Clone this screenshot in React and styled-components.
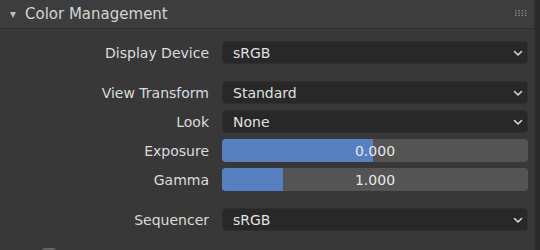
import React from "react";
import styled, { createGlobalStyle } from "styled-components";

const Global = createGlobalStyle`
  html, body {
    margin: 0;
    padding: 0;
    background: #2e2e2e;
  }
  body {
    font-family: "DejaVu Sans", "Liberation Sans", sans-serif;
  }
`;

const Chevron = () => (
  <svg width="10" height="7" viewBox="0 0 10 7">
    <path d="M1.5 1.5 L5 5 L8.5 1.5" fill="none" stroke="#d8d8d8" strokeWidth="1.6" strokeLinecap="round" strokeLinejoin="round" />
  </svg>
);

const Grip = () => (
  <svg width="14" height="8" viewBox="0 0 14 8">
    {[0, 1, 2, 3].map((c) =>
      [0, 1, 2].map((r) => (
        <rect key={c + "-" + r} x={1 + c * 3.3} y={1 + r * 2.4} width="1.5" height="1.3" fill="#8a8a8a" />
      ))
    )}
  </svg>
);

const rows = [
  [{ label: "Display Device", kind: "menu", value: "sRGB" }],
  [
    { label: "View Transform", kind: "menu", value: "Standard" },
    { label: "Look", kind: "menu", value: "None" },
    { label: "Exposure", kind: "slider", value: "0.000", fill: 49.3 },
    { label: "Gamma", kind: "slider", value: "1.000", fill: 19.9 },
  ],
  [{ label: "Sequencer", kind: "menu", value: "sRGB" }],
];

const App = () => {
  return (
    <Screen>
      <Global />
      <Panel>
        <Header>
          <Triangle />
          <Title>Color Management</Title>
          <GripBox>
            <Grip />
          </GripBox>
        </Header>
        <Body>
          {rows.map((group, gi) => (
            <Group key={gi}>
              {group.map((item) => (
                <Row key={item.label}>
                  <Label>{item.label}</Label>
                  {item.kind === "menu" ? (
                    <Menu>
                      <span>{item.value}</span>
                      <Chevron />
                    </Menu>
                  ) : (
                    <Slider>
                      <Fill style={{ width: item.fill + "%" }} />
                      <SliderText>{item.value}</SliderText>
                    </Slider>
                  )}
                </Row>
              ))}
            </Group>
          ))}
          <Group>
            <CheckRow>
              <Check />
            </CheckRow>
          </Group>
        </Body>
      </Panel>
      <Edge />
    </Screen>
  );
};

export default App;

const Screen = styled.div`
  display: flex;
  width: 540px;
  height: 250px;
  overflow: hidden;
`;

const Panel = styled.div`
  width: 534px;
  background: #383838;
  display: flex;
  flex-direction: column;
  overflow: hidden;

  & > * {
    flex-shrink: 0;
  }
`;

const Edge = styled.div`
  flex: 1;
  background: #2b2b2b;
  border-left: 1px solid #333;
`;

const Header = styled.div`
  height: 29px;
  background: #3d3d3d;
  border-bottom: 1px solid #2f2f2f;
  display: flex;
  align-items: center;
  padding-left: 10px;
  box-sizing: border-box;
`;

const Triangle = styled.div`
  width: 0;
  height: 0;
  border-left: 3.5px solid transparent;
  border-right: 3.5px solid transparent;
  border-top: 6px solid #bdbdbd;
  margin-right: 9px;
  margin-top: 1px;
`;

const Title = styled.div`
  font-size: 15px;
  color: #d4d4d4;
  flex: 1;
  line-height: 1;
`;

const GripBox = styled.div`
  display: flex;
  margin-right: 6px;
  margin-top: -2px;
`;

const Body = styled.div`
  display: flex;
  flex-direction: column;
  gap: 17px;
  padding: 12px 6px 0 0;
`;

const Group = styled.div`
  display: flex;
  flex-direction: column;
  gap: 6px;
`;

const Row = styled.div`
  display: flex;
  align-items: center;
  height: 23px;
`;

const Label = styled.div`
  width: 209px;
  margin-right: 13px;
  text-align: right;
  font-size: 14px;
  color: #dcdcdc;
`;

const Menu = styled.div`
  flex: 1;
  height: 23px;
  box-sizing: border-box;
  background: #282828;
  border: 1px solid #2f2f2f;
  border-radius: 4px;
  display: flex;
  align-items: center;
  justify-content: space-between;
  padding: 0 4px 0 10px;
  font-size: 14px;
  color: #e0e0e0;

  svg {
    margin-top: 1px;
  }
`;

const Slider = styled.div`
  flex: 1;
  height: 23px;
  position: relative;
  background: #545454;
  border-radius: 4px;
  overflow: hidden;
  display: flex;
  align-items: center;
  justify-content: center;
`;

const Fill = styled.div`
  position: absolute;
  left: 0;
  top: 0;
  bottom: 0;
  background: #5680c2;
`;

const SliderText = styled.span`
  position: relative;
  font-size: 14px;
  color: #e8e8e8;
`;

const CheckRow = styled.div`
  height: 23px;
  padding-left: 42px;
`;

const Check = styled.div`
  width: 14px;
  height: 14px;
  border-radius: 3px;
  background: #545454;
  border-top: 1px solid #6a6a6a;
`;
